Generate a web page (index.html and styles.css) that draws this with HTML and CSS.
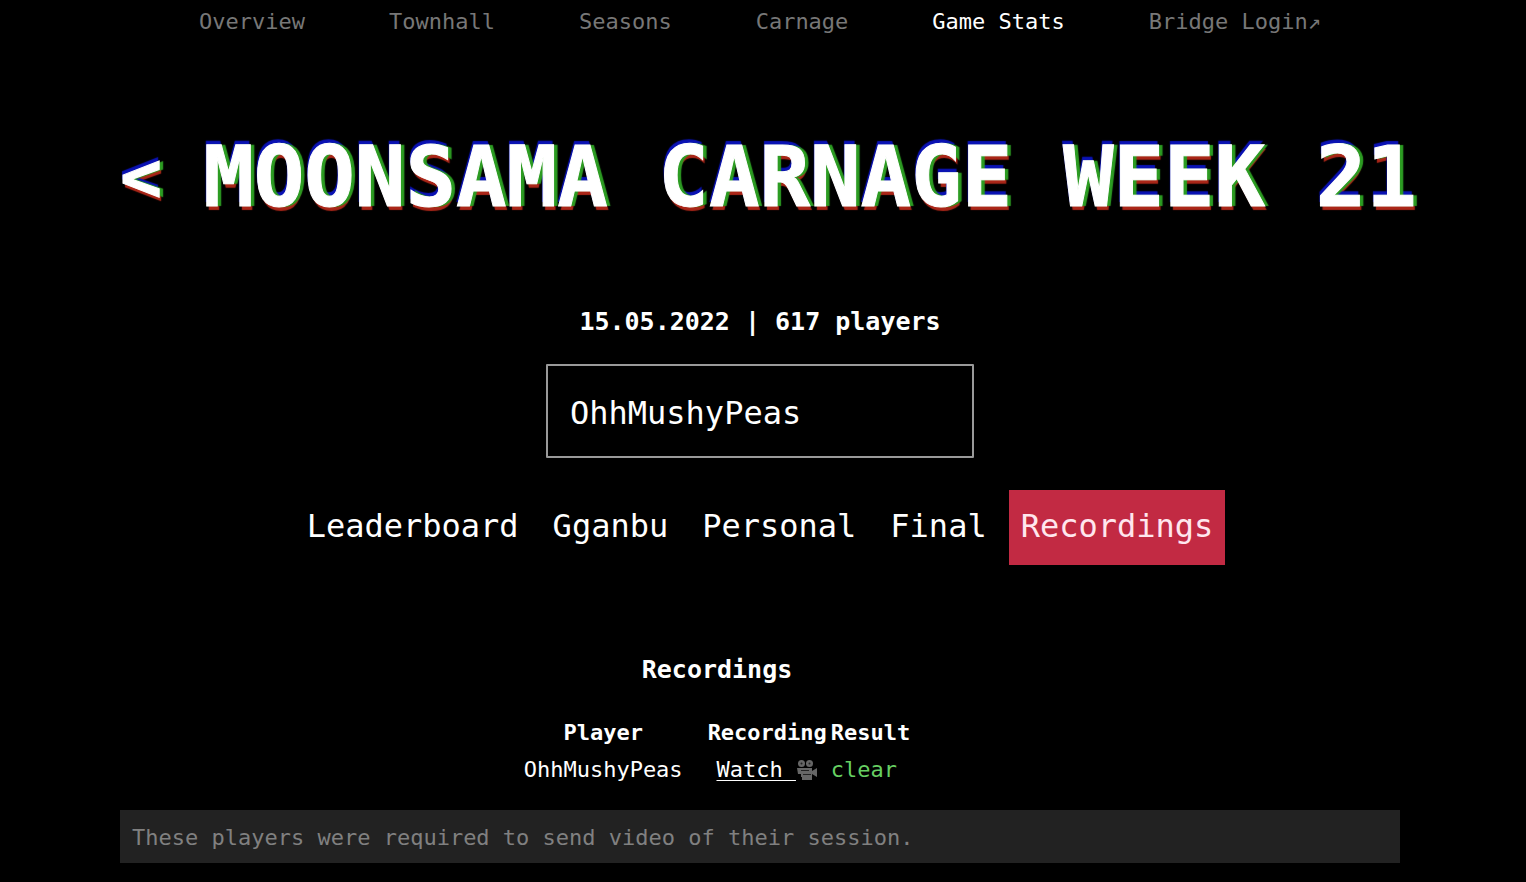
FILE: index.html
```html
<!DOCTYPE html>
<html lang="en">
<head>
<meta charset="utf-8">
<title>Moonsama Carnage Week 21</title>
<link rel="stylesheet" href="styles.css">
</head>
<body>
<nav class="nav">
  <a href="#">Overview</a>
  <a href="#">Townhall</a>
  <a href="#">Seasons</a>
  <a href="#">Carnage</a>
  <a href="#" class="active" aria-current="page">Game Stats</a>
  <a href="#">Bridge Login↗</a>
</nav>
<main class="page">
  <h1 class="title"><a href="#" aria-label="Back">&lt;</a><span>MOONSAMA CARNAGE WEEK 21</span></h1>
  <h2 class="summary">15.05.2022 | 617 players</h2>
  <input class="search" type="text" value="OhhMushyPeas" aria-label="Player name">
  <div class="tabs">
    <button type="button">Leaderboard</button>
    <button type="button">Gganbu</button>
    <button type="button">Personal</button>
    <button type="button">Final</button>
    <button type="button" class="selected">Recordings</button>
  </div>
  <section class="recordings">
    <h2>Recordings</h2>
    <table>
      <thead>
        <tr><th scope="col">Player</th><th scope="col">Recording</th><th scope="col">Result</th></tr>
      </thead>
      <tbody>
        <tr>
          <td>OhhMushyPeas</td>
          <td><div class="watch"><a href="#">Watch&nbsp;</a><svg viewBox="0 0 22 22" aria-hidden="true"><g fill="#666"><circle cx="5.5" cy="4.5" r="3.5"/><circle cx="13.5" cy="4.5" r="3.5"/><path d="M1 9h15v3l5-3v9l-5-3v3H5v-3H2z"/><path d="M6 18h10v3H6z"/></g><g fill="#222"><circle cx="5.5" cy="4.5" r="1"/><circle cx="13.5" cy="4.5" r="1"/><path d="M5 11h8v1H5zM7 15h8v1H7z"/></g></svg></div></td>
          <td class="clear">clear</td>
        </tr>
      </tbody>
    </table>
  </section>
  <p class="note">These players were required to send video of their session.</p>
</main>
</body>
</html>
```
FILE: styles.css
```css
* {
  box-sizing: border-box;
}

body {
  margin: 0;
  padding: 6px 6px 19px 0;
  background: #000;
  color: #fff;
  font: 22px/32px "DejaVu Sans Mono", monospace;
}

a {
  color: inherit;
}

.nav {
  display: flex;
  justify-content: center;
  gap: 84px;
  color: #777;
}

.nav a {
  text-decoration: none;
  white-space: nowrap;
}

.nav .active {
  color: #fff;
}

.page {
  display: flex;
  flex-direction: column;
  align-items: center;
  max-width: 1280px;
  margin: 0 auto;
}

.title {
  display: flex;
  align-self: flex-start;
  gap: 41px;
  margin: 97px 0 0;
  font-size: 84px;
  line-height: 84px;
  white-space: nowrap;
  -webkit-text-stroke: 1px #fff;
  text-shadow: 4px 0 1px #2c9c22, -1px -4px 1px #0a12b4, 2px 4px 1px #ab2618;
}

.title a {
  font-size: 70px;
  text-decoration: none;
}

.summary {
  margin: 87px 0 26px;
  font-size: 25px;
  line-height: 32px;
}

.search {
  width: 428px;
  padding: 28px 22px 24px;
  border: 2px solid #999;
  border-radius: 1px;
  background: #000;
  color: #fff;
  font-family: inherit;
  font-size: 32px;
  line-height: 38px;
}

.tabs {
  display: flex;
  gap: 10px;
  margin-top: 32px;
}

.tabs button {
  padding: 18px 12px 20px;
  border: 0;
  background: none;
  color: #fff;
  font-family: inherit;
  font-size: 32px;
  line-height: 37px;
}

.tabs .selected {
  background: #c22a43;
  color: #ffe6ee;
}

.recordings {
  margin: 89px 86px 19px 0;
  text-align: center;
}

.recordings h2 {
  margin: 0 0 26px;
  font-size: 25px;
  line-height: 32px;
}

table {
  margin: 0 auto;
  border-spacing: 4px 5px;
}

th,
td {
  padding: 0;
}

th:first-child,
td:first-child {
  padding-right: 21px;
}

td:last-child {
  text-align: left;
}

.watch {
  display: flex;
  align-items: center;
  justify-content: center;
}

.watch a {
  text-decoration-thickness: 1px;
  text-underline-offset: 3px;
}

.watch svg {
  width: 22px;
  height: 22px;
}

.clear {
  color: #66cf62;
}

.note {
  align-self: stretch;
  margin: 0;
  padding: 12px 12px 9px;
  background: #222;
  color: #808080;
}
```
